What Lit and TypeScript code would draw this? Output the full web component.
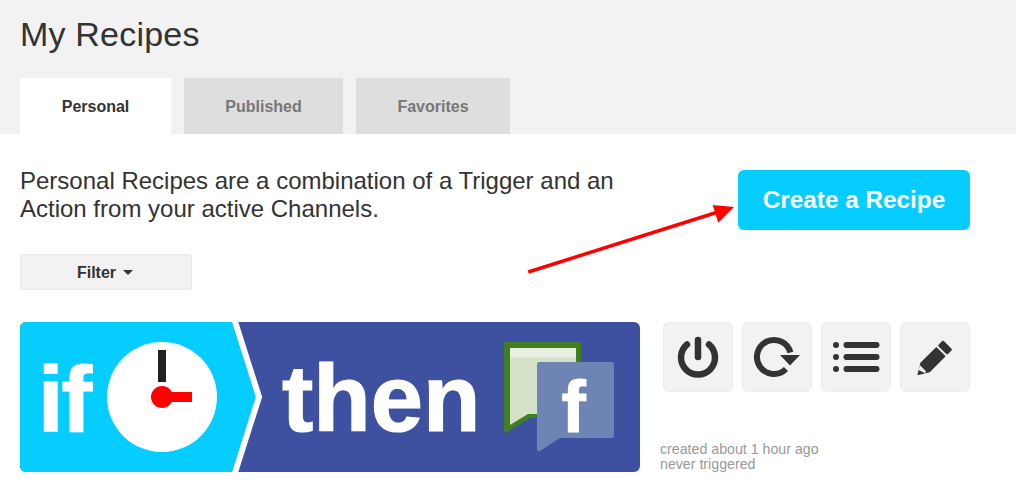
import { LitElement, html, css, svg } from 'lit';
import { customElement } from 'lit/decorators.js';

const powerIcon = svg`
  <path d="M24 22.5A17 17 0 1 0 46 22.5" fill="none" stroke="#333" stroke-width="6.5" stroke-linecap="round"/>
  <line x1="35" y1="18" x2="35" y2="35" stroke="#333" stroke-width="6.5" stroke-linecap="round"/>`;

const repeatIcon = svg`
  <path d="M44 47A17 17 0 1 1 48.4 30.6" fill="none" stroke="#333" stroke-width="6"/>
  <polygon points="38,33 58,33 48,43.5" fill="#333"/>`;

const listIcon = svg`
  <circle cx="15" cy="23" r="3"/><circle cx="15" cy="35" r="3"/><circle cx="15" cy="47" r="3"/>
  <rect x="22.5" y="20" width="36" height="6" rx="3"/>
  <rect x="22.5" y="32" width="36" height="6" rx="3"/>
  <rect x="22.5" y="44" width="36" height="6" rx="3"/>`;

const pencilIcon = svg`
  <g transform="translate(17.3 53.3) rotate(-45)">
    <polygon points="0,0 11,-6.6 33.5,-6.6 33.5,6.6 11,6.6" fill="#333"/>
    <rect x="35.5" y="-6.6" width="7.5" height="13.2" rx="1.2" fill="#333"/>
    <polygon points="4.6,-2.8 9,-5.2 9,3.2 7,4.2" fill="#f2f2f2"/>
  </g>`;

@customElement('app-root')
export class AppRoot extends LitElement {
  static styles = css`
    :host {
      display: block;
      font-family: 'Liberation Sans', Arial, sans-serif;
      color: #333;
      background: #fff;
      position: relative;
    }

    .page-head {
      background: #f2f2f2;
      height: 134px;
      padding: 0 20px;
      box-sizing: border-box;
      display: flex;
      flex-direction: column;
      justify-content: flex-end;
    }

    h1 {
      margin: 0 0 24px;
      font-size: 34px;
      line-height: 40px;
      font-weight: 400;
      letter-spacing: 0.2px;
    }

    .tabs {
      display: flex;
      gap: 13px;
    }

    .tab {
      height: 56px;
      padding-top: 2px;
      box-sizing: border-box;
      display: flex;
      align-items: center;
      justify-content: center;
      background: #dedede;
      color: #777;
      font-size: 16px;
      font-weight: 700;
    }

    .tab.active {
      background: #fff;
      color: #333;
    }

    .content {
      padding: 36px 46px 15px 20px;
    }

    .intro {
      display: flex;
      justify-content: space-between;
      align-items: flex-start;
    }

    .intro p {
      margin: -3px 0 0;
      width: 620px;
      font-size: 24px;
      line-height: 28px;
    }

    .create {
      width: 232px;
      height: 60px;
      display: flex;
      align-items: center;
      justify-content: center;
      background: #05cdff;
      border-radius: 6px;
      color: #fff;
      font-size: 24.3px;
      font-weight: 700;
    }

    .filter {
      width: 172px;
      height: 36px;
      box-sizing: border-box;
      margin-top: 24px;
      padding: 1px 2px 0 0;
      display: flex;
      align-items: center;
      justify-content: center;
      gap: 7px;
      background: #f2f2f2;
      border: 1px solid #e8e8e8;
      border-radius: 3px;
      font-size: 16px;
      font-weight: 700;
    }

    .caret {
      width: 0;
      height: 0;
      border-left: 5px solid transparent;
      border-right: 5px solid transparent;
      border-top: 5px solid #333;
    }

    .recipe {
      display: flex;
      margin-top: 32px;
      gap: 20px;
    }

    .banner {
      position: relative;
      width: 620px;
      height: 150px;
      border-radius: 6px;
      overflow: hidden;
      display: flex;
      align-items: center;
      color: #fff;
      font-weight: 700;
      line-height: 150px;
    }

    .banner > * {
      position: relative;
    }

    .banner > .banner-bg {
      position: absolute;
      inset: 0;
    }

    .word-if {
      margin-left: 18px;
      width: 69px;
      padding-top: 3px;
      font-size: 92px;
      letter-spacing: -2px;
      -webkit-text-stroke: 1.2px #fff;
    }

    .word-then {
      margin-left: 65px;
      width: 222px;
      padding-top: 3px;
      font-size: 94px;
      -webkit-text-stroke: 1.2px #fff;
    }

    .clock {
      display: block;
    }

    .side {
      flex: 1;
      display: flex;
      flex-direction: column;
      justify-content: space-between;
    }

    .actions {
      display: flex;
      gap: 9px;
      padding-left: 3px;
    }

    .action {
      width: 70px;
      height: 70px;
      box-sizing: border-box;
      background: #f2f2f2;
      border: 1px solid #ececec;
      border-radius: 6px;
      fill: #333;
    }

    .action svg {
      display: block;
      margin: -1px;
    }

    .meta {
      font-size: 14.2px;
      line-height: 15px;
      color: #999;
    }

    .pointer {
      position: absolute;
      left: 520px;
      top: 200px;
    }
  `;

  render() {
    const tabs = [
      { label: 'Personal', width: 151, active: true },
      { label: 'Published', width: 159, active: false },
      { label: 'Favorites', width: 154, active: false },
    ];
    const actions = [powerIcon, repeatIcon, listIcon, pencilIcon];
    return html`
      <div class="page-head">
        <h1>My Recipes</h1>
        <div class="tabs">
          ${tabs.map(
            (t) => html`<div class="tab ${t.active ? 'active' : ''}" style="width:${t.width}px">${t.label}</div>`
          )}
        </div>
      </div>
      <div class="content">
        <div class="intro">
          <p>Personal Recipes are a combination of a Trigger and an Action from your active Channels.</p>
          <div class="create">Create a Recipe</div>
        </div>
        <div class="filter">Filter <span class="caret"></span></div>
        <div class="recipe">
          <div class="banner">
            <svg class="banner-bg" width="620" height="150" viewBox="0 0 620 150">
              <rect width="620" height="150" fill="#3e50a0"/>
              <polygon points="0,0 212,0 236,75 212,150 0,150" fill="#05cdff"/>
              <polyline points="214.2,-3 239,75 214.2,153" fill="none" stroke="#fff" stroke-width="6"/>
            </svg>
            <span class="word-if">if</span>
            <svg class="clock" width="110" height="110" viewBox="0 0 110 110">
              <circle cx="55" cy="55" r="55" fill="#fff"/>
              <rect x="51" y="8" width="8" height="32" fill="#222"/>
              <rect x="55" y="50" width="30" height="10" fill="#f00"/>
              <circle cx="55" cy="55" r="11" fill="#f00"/>
            </svg>
            <span class="word-then">then</span>
            <svg class="clock" width="112" height="112" viewBox="0 0 112 112">
              <path d="M3 1H75a2 2 0 0 1 2 2V77H26L4 90.5a2 2 0 0 1-4-1.5V3a2 2 0 0 1 3-2Z" fill="#3f7f1f"/>
              <path d="M6 7H72V73H24L6 84Z" fill="#d3e2c8"/>
              <rect x="6" y="7" width="66" height="9.5" fill="#e9f0e1"/>
              <path d="M35 21H108a2 2 0 0 1 2 2V95a2 2 0 0 1-2 2H56L36 110a2 2 0 0 1-3-2V23a2 2 0 0 1 2-2Z" fill="#6d84b4"/>
              <text x="57.5" y="91" fill="#fff" stroke="#fff" stroke-width="1" font-size="73" font-weight="700" font-family="'Liberation Sans', Arial, sans-serif">f</text>
            </svg>
          </div>
          <div class="side">
            <div class="actions">
              ${actions.map(
                (icon) => html`<div class="action"><svg width="70" height="70" viewBox="0 0 70 70">${icon}</svg></div>`
              )}
            </div>
            <div class="meta">created about 1 hour ago<br />never triggered</div>
          </div>
        </div>
      </div>
      <svg class="pointer" width="220" height="80" viewBox="520 200 220 80">
        <line x1="528.3" y1="272" x2="718" y2="212" stroke="#f00" stroke-width="3.5"/>
        <polygon points="734,207 712.7,205 718.3,222.7" fill="#f00"/>
      </svg>
    `;
  }
}
